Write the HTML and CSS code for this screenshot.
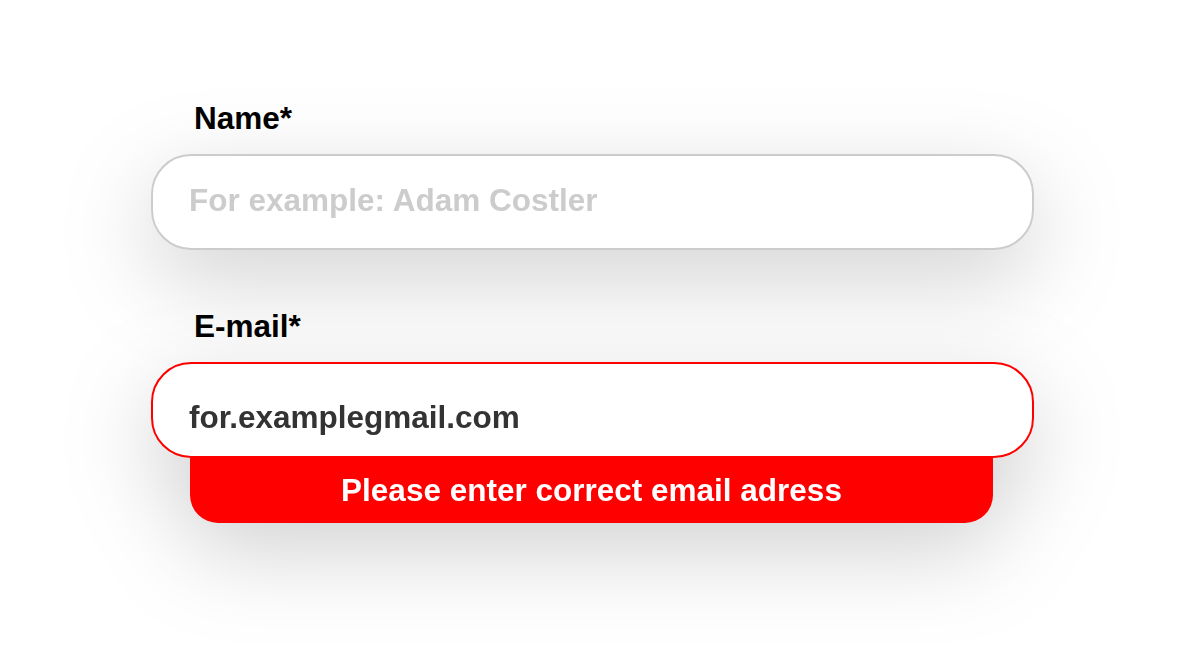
FILE: index.html
```html
<!DOCTYPE html>
<html lang="en">
<head>
  <meta charset="UTF-8" />
  <meta name="viewport" content="width=device-width, initial-scale=1.0"/>
  <title>Contact form</title>
  <link rel="stylesheet" href="styles.css">
</head>
<body>

  <form class="contact-form" onsubmit="return false">
    <div class="field">
      <label class="field-label" for="name">Name*</label>
      <div class="field-control">
        <input class="field-input" id="name" type="text" placeholder="For example: Adam Costler">
      </div>
    </div>

    <div class="field">
      <label class="field-label" for="email">E-mail*</label>
      <div class="field-control">
        <input class="field-input field-input--error" id="email" type="text" value="for.examplegmail.com">
        <div class="field-error">Please enter correct email adress</div>
      </div>
    </div>
  </form>

</body>
</html>
```

FILE: styles.css
```css
body {
  margin: 0;
  min-height: 664px;
  background-color: #ffffff;
  font-family: "Liberation Sans", Arial, sans-serif;
}

.contact-form {
  width: 883px;
  padding: 100px 0 0 151px;
  display: flex;
  flex-direction: column;
  gap: 58px;
}

.field {
  display: flex;
  flex-direction: column;
}

.field-label {
  padding-left: 43px;
  margin-bottom: 18px;
  font-size: 31.5px;
  line-height: 36px;
  font-weight: bold;
  color: #000;
}

.field-control {
  display: flex;
  flex-direction: column;
  filter: drop-shadow(0 28px 45px rgba(0, 0, 0, 0.18));
}

.field-input {
  box-sizing: border-box;
  width: 100%;
  height: 96px;
  padding: 0 36px 4px;
  border: 2px solid #cccccc;
  border-radius: 40px;
  background-color: #fff;
  font-family: inherit;
  font-size: 31.5px;
  font-weight: bold;
  color: #333;
  outline: none;
}

.field-input::placeholder {
  color: #cccccc;
}

.field-input--error {
  padding: 14px 36px 0;
  border-color: #ff0000;
}

.field-error {
  margin: 0 41px 0 39px;
  height: 65px;
  display: flex;
  align-items: center;
  justify-content: center;
  background-color: #ff0000;
  border-radius: 0 0 28px 28px;
  font-size: 31.5px;
  font-weight: bold;
  color: #fff;
}
```
